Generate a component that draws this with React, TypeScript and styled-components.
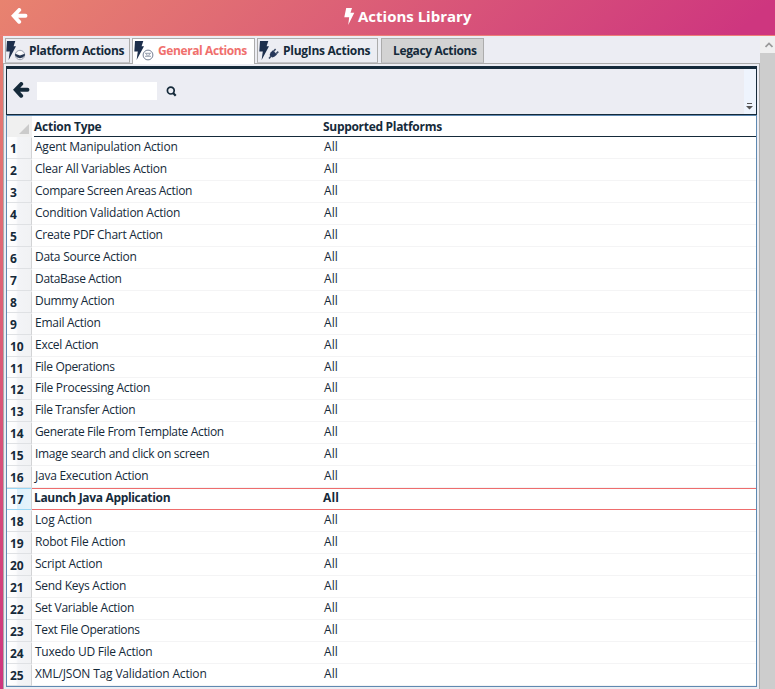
import React from "react";
import styled, { createGlobalStyle } from "styled-components";

const INK = "#152a3a";
const FONT = `"Open Sans", "Noto Sans", sans-serif`;

const GlobalStyle = createGlobalStyle`
  * { box-sizing: border-box; }
  html, body { margin: 0; padding: 0; overflow: hidden; }
  body { font-family: ${FONT}; color: ${INK}; }
  svg { display: block; flex: none; }
`;

const Window = styled.div`
  width: 775px;
  height: 689px;
  overflow: hidden;
  display: flex;
  flex-direction: column;
  background: linear-gradient(to bottom right, #e8836f 0%, #ce367f 50%, #ce367f 100%);
`;

const TitleBar = styled.header`
  height: 36px;
  flex: none;
  display: grid;
  grid-template-columns: 344px auto 1fr;
  align-items: start;
  border-bottom: 1px solid #ee7f78;
  color: #fff;
`;

const BackSlot = styled.div`
  padding: 8px 0 0 11px;
`;

const BoltSlot = styled.div`
  display: flex;
  align-items: flex-start;
`;

const Title = styled.h1`
  margin: 6px 0 0 2px;
  font-size: 15px;
  line-height: 21px;
  font-weight: 700;
  letter-spacing: 0;
  white-space: nowrap;
`;

const Body = styled.div`
  display: flex;
  flex: 1;
  min-height: 0;
  padding-left: 3px;
`;

const Panel = styled.main`
  width: 757px;
  background: #ecedf3;
  display: flex;
  flex-direction: column;
`;

const TabStrip = styled.nav`
  height: 28px;
  flex: none;
  display: flex;
  padding: 2px 0 0 2px;
  border-bottom: 1px solid #acacac;
`;

const Tab = styled.div<{ $w: number; $gap: number; $pad: number; $kind?: "active" | "legacy" }>`
  width: ${(p) => p.$w}px;
  height: ${(p) => (p.$kind === "active" ? 26 : 25)}px;
  margin-left: ${(p) => p.$gap}px;
  padding-left: ${(p) => p.$pad}px;
  display: flex;
  border: 1px solid #acacac;
  border-bottom: ${(p) => (p.$kind === "active" ? "none" : "1px solid #c4c4c8")};
  background: ${(p) => (p.$kind === "active" ? "#fff" : p.$kind === "legacy" ? "#d3d3d3" : "#ecedf3")};
  color: ${(p) => (p.$kind === "active" ? "#f0706d" : INK)};
  font-size: 12px;
  font-weight: 700;
  line-height: 24px;
  white-space: nowrap;
`;

const Label = styled.span<{ $ls: number }>`
  letter-spacing: ${(p) => p.$ls}px;
`;

const TabIcon = styled.div<{ $w?: number }>`
  width: ${(p) => p.$w ?? 24}px;
  height: 23px;
  flex: none;
  padding-top: 1px;
`;

const Content = styled.section`
  flex: 1;
  padding: 2px 2px 2px 2px;
  border: solid #acacac;
  border-width: 0 1px 0 1px;
  min-height: 0;
`;

const Toolbar = styled.div`
  width: 751px;
  height: 49px;
  display: flex;
  border: 1px solid ${INK};
  border-top-width: 3px;
  background: #ecedf3;
`;

const ToolbarItems = styled.div`
  flex: 1;
  display: flex;
  align-items: flex-start;
  padding: 13px 0 0 6px;
`;

const SearchInput = styled.input`
  width: 120px;
  height: 18px;
  margin: 0 9px 0 7px;
  padding: 0;
  border: 0;
  outline: 0;
  background: #fff;
`;

const Overflow = styled.div`
  width: 12px;
  background: #eef4fd;
  display: flex;
  align-items: flex-end;
  padding: 0 0 4px 2px;
`;

const Grid = styled.div`
  width: 751px;
  height: 572px;
  border: 1px solid #5f89b1;
  background: #fff;
`;

const GridHeader = styled.div`
  height: 21px;
  display: flex;
  font-size: 12px;
  font-weight: 700;
  line-height: 21px;
`;

const Corner = styled.div`
  width: 25px;
  background: #f0f0f0;
  display: flex;
  justify-content: flex-end;
  align-items: flex-end;
  padding: 0 3px 3px 0;
`;

const HeaderCells = styled.div`
  flex: 1;
  margin-left: 2px;
  display: flex;
  border-bottom: 1px solid ${INK};
`;

const HeaderCell = styled.div<{ $w: number; $ls: number }>`
  width: ${(p) => p.$w}px;
  letter-spacing: ${(p) => p.$ls}px;
  white-space: nowrap;
`;

const Row = styled.div<{ $selected?: boolean }>`
  height: 21.96px;
  display: flex;
  font-size: 12px;
  line-height: 21px;
  font-weight: ${(p) => (p.$selected ? 700 : 400)};
`;

const RowHead = styled.div<{ $selected?: boolean }>`
  width: 25px;
  padding-left: 3px;
  border-right: 1px solid #d2d3d5;
  border-bottom: 1px solid ${(p) => (p.$selected ? "#9bd7f4" : "#dfe1e4")};
  border-top: 1px solid ${(p) => (p.$selected ? "#9bd7f4" : "transparent")};
  background: ${(p) =>
    p.$selected
      ? "linear-gradient(to right, #fafdff 0 10px, #def1fb 10px, #e6f3fb 100%)"
      : "linear-gradient(to right, #fff 0, #fcfcfd 9px, #f3f4f7 11px, #f1f2f4 100%)"};
  font-weight: 700;
  font-size: 12px;
  line-height: 21px;
  letter-spacing: -0.1px;
`;

const RowCells = styled.div<{ $selected?: boolean }>`
  flex: 1;
  display: flex;
  border-top: 1px solid ${(p) => (p.$selected ? "#ee6d6d" : "transparent")};
  border-bottom: 1px solid ${(p) => (p.$selected ? "#ee6d6d" : "#f4f4f5")};
  line-height: 18px;
`;

const Cell = styled.div<{ $w: number; $ls: number; $selected?: boolean }>`
  width: ${(p) => p.$w}px;
  padding-left: ${(p) => (p.$selected ? 2 : 3)}px;
  letter-spacing: ${(p) => p.$ls}px;
  white-space: nowrap;
`;

const ScrollBar = styled.aside`
  width: 15px;
  background: #cdcdcd;
`;

const ScrollUp = styled.div`
  height: 17px;
  background: #f0f0f0;
  padding: 6px 0 0 5px;
`;

const Arrow = ({ color }: { color: string }) => (
  <svg width="17" height="16" viewBox="0 0 17 16">
    <path d="M8.2 2 2.6 7.8 8.2 13.8M3 7.8H14.5" fill="none" stroke={color} strokeWidth="3.9" strokeLinecap="round" strokeLinejoin="miter" />
  </svg>
);

const BoltIcon = styled.svg`
  margin-top: 8px;
`;

const SearchIcon = styled.svg`
  margin-top: 4px;
`;

const Bolt = () => (
  <BoltIcon width="12" height="18" viewBox="0 0 12 18">
    <path d="M2.2 0H8L6.5 4.8H10.3L4.2 17L5.2 9.3H0.3Z" fill="#fff" />
  </BoltIcon>
);

const TabBolt = ({ kind }: { kind: "platform" | "general" | "plugin" }) => (
  <svg width="24" height="22" viewBox="0 0 24 22">
    <path d="M1 1H9.3L7.6 6.3H10L2.6 20L3.8 11.5H0.3Z" fill="#1d2f4c" />
    {kind === "platform" && (
      <>
        <circle cx="14" cy="15" r="4.7" fill="#f5f5f8" stroke="#8d95a4" strokeWidth=".9" />
        <path d="M9.2 13.8L14 15.6L18.8 13.8V15.5Q17 18 14 18.2Q11 18 9.2 15.5Z" fill="#263752" />
        <path d="M10.7 12.6L14 11.4L17.3 12.6L14 13.9Z" fill="#fff" />
      </>
    )}
    {kind === "general" && (
      <>
        <circle cx="14" cy="15" r="4.9" fill="#fff" stroke="#737e92" strokeWidth="1" />
        <path d="M11 13.3H17M11 16.3H17M12.3 13.4L13.3 16M15.7 13.4L14.7 16" fill="none" stroke="#98a0af" strokeWidth="1" />
      </>
    )}
    {kind === "plugin" && (
      <g>
        <path d="M11.6 12.6L13.9 10.3L18 14.4L15.7 16.6Q13.4 18.2 11.6 16.6Q10 14.8 11.6 12.6Z" fill="#26375a" />
        <path d="M14.6 11.2L16.6 9M17.2 13.6L19.3 11.6M12.2 16L10 18.5" stroke="#3c4b66" strokeWidth="1.6" />
      </g>
    )}
  </svg>
);

type Action = { name: string; spacing: number };

const actions: Action[] = [
  { name: "Agent Manipulation Action", spacing: -0.22 },
  { name: "Clear All Variables Action", spacing: -0.25 },
  { name: "Compare Screen Areas Action", spacing: -0.32 },
  { name: "Condition Validation Action", spacing: -0.24 },
  { name: "Create PDF Chart Action", spacing: -0.29 },
  { name: "Data Source Action", spacing: -0.26 },
  { name: "DataBase Action", spacing: -0.33 },
  { name: "Dummy Action", spacing: -0.28 },
  { name: "Email Action", spacing: -0.27 },
  { name: "Excel Action", spacing: -0.28 },
  { name: "File Operations", spacing: -0.34 },
  { name: "File Processing Action", spacing: -0.25 },
  { name: "File Transfer Action", spacing: -0.36 },
  { name: "Generate File From Template Action", spacing: -0.35 },
  { name: "Image search and click on screen", spacing: -0.31 },
  { name: "Java Execution Action", spacing: -0.25 },
  { name: "Launch Java Application", spacing: -0.33 },
  { name: "Log Action", spacing: -0.14 },
  { name: "Robot File Action", spacing: -0.2 },
  { name: "Script Action", spacing: -0.22 },
  { name: "Send Keys Action", spacing: -0.27 },
  { name: "Set Variable Action", spacing: -0.29 },
  { name: "Text File Operations", spacing: -0.36 },
  { name: "Tuxedo UD File Action", spacing: -0.25 },
  { name: "XML/JSON Tag Validation Action", spacing: -0.17 },
];
const SELECTED = 16;

export default function App() {
  return (
    <>
      <GlobalStyle />
      <Window>
        <TitleBar>
          <BackSlot><Arrow color="#fff" /></BackSlot>
          <BoltSlot>
            <Bolt />
            <Title>Actions Library</Title>
          </BoltSlot>
        </TitleBar>
        <Body>
          <Panel>
            <TabStrip>
              <Tab $w={125} $gap={0} $pad={0}>
                <TabIcon $w={23}><TabBolt kind="platform" /></TabIcon>
                <Label $ls={-0.35}>Platform Actions</Label>
              </Tab>
              <Tab $w={123} $gap={2} $pad={1} $kind="active">
                <TabIcon><TabBolt kind="general" /></TabIcon>
                <Label $ls={-0.4}>General Actions</Label>
              </Tab>
              <Tab $w={121} $gap={2} $pad={1}>
                <TabIcon><TabBolt kind="plugin" /></TabIcon>
                <Label $ls={-0.28}>PlugIns Actions</Label>
              </Tab>
              <Tab $w={103} $gap={3} $pad={11} $kind="legacy">
                <Label $ls={-0.35}>Legacy Actions</Label>
              </Tab>
            </TabStrip>
            <Content>
              <Toolbar>
                <ToolbarItems>
                  <Arrow color={INK} />
                  <SearchInput aria-label="Search" />
                  <SearchIcon width="11" height="12" viewBox="0 0 11 12">
                    <circle cx="4.8" cy="4.6" r="3.4" fill="none" stroke={INK} strokeWidth="1.7" />
                    <path d="M7.1 7L9.7 9.8" stroke={INK} strokeWidth="2.2" />
                  </SearchIcon>
                </ToolbarItems>
                <Overflow>
                  <svg width="7" height="7" viewBox="0 0 7 7">
                    <path d="M1 0H6V1H1ZM0 3H7L3.5 6.5Z" fill="#555" />
                  </svg>
                </Overflow>
              </Toolbar>
              <Grid>
                <GridHeader>
                  <Corner>
                    <svg width="10" height="10" viewBox="0 0 10 10"><path d="M10 0V10H0Z" fill="#cbcbcb" /></svg>
                  </Corner>
                  <HeaderCells>
                    <HeaderCell $w={289} $ls={-0.25}>Action Type</HeaderCell>
                    <HeaderCell $w={200} $ls={-0.3}>Supported Platforms</HeaderCell>
                  </HeaderCells>
                </GridHeader>
                {actions.map(({ name, spacing }, i) => {
                  const selected = i === SELECTED;
                  return (
                    <Row key={name} $selected={selected}>
                      <RowHead $selected={selected}>{i + 1}</RowHead>
                      <RowCells $selected={selected}>
                        <Cell $w={289} $ls={spacing} $selected={selected}>{name}</Cell>
                        <Cell $w={200} $ls={0.1} $selected={selected}>All</Cell>
                      </RowCells>
                    </Row>
                  );
                })}
              </Grid>
            </Content>
          </Panel>
          <ScrollBar>
            <ScrollUp>
              <svg width="8" height="6" viewBox="0 0 8 6"><path d="M.5 5L4 1.4L7.5 5" fill="none" stroke="#999" strokeWidth="1.7" /></svg>
            </ScrollUp>
          </ScrollBar>
        </Body>
      </Window>
    </>
  );
}
